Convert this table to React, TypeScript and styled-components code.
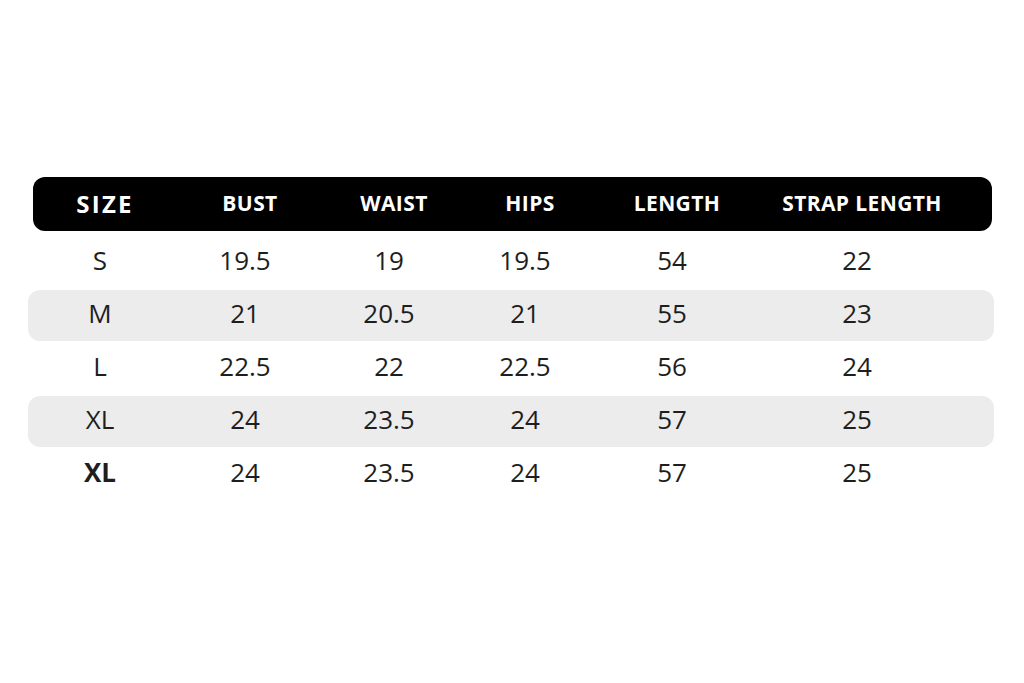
import styled, { createGlobalStyle } from 'styled-components'

const GlobalStyle = createGlobalStyle`
  html, body {
    margin: 0;
    padding: 0;
    background: #ffffff;
  }
  body {
    font-family: 'Open Sans', 'Noto Sans', 'DejaVu Sans', sans-serif;
    color: #1e1e1e;
  }
`

const COLUMNS = '144px 146px 142px 130px 164px 206px 1fr'

const Page = styled.div`
  width: 1024px;
  height: 683px;
  padding-top: 177px;
  box-sizing: border-box;
`

const Table = styled.div`
  margin-left: 28px;
  width: 966px;
  display: flex;
  flex-direction: column;
  gap: 2px;
`

const Header = styled.div`
  display: grid;
  grid-template-columns: ${COLUMNS};
  align-items: center;
  height: 54px;
  margin: 0 2px 4px 5px;
  background: #000000;
  border-radius: 12px;
  color: #ffffff;
`

const HeadCell = styled.div<{ $big?: boolean }>`
  text-align: center;
  font-weight: 700;
  font-size: ${(p) => (p.$big ? '24px' : '21px')};
  letter-spacing: ${(p) => (p.$big ? '2.2px' : '0.4px')};
  padding-bottom: 2px;
`

const Row = styled.div<{ $shaded: boolean }>`
  display: grid;
  grid-template-columns: ${COLUMNS};
  align-items: center;
  height: 51px;
  border-radius: 12px;
  background: ${(p) => (p.$shaded ? '#ececec' : 'transparent')};
`

const Cell = styled.div<{ $bold?: boolean }>`
  text-align: center;
  font-size: 26px;
  font-weight: ${(p) => (p.$bold ? 700 : 400)};
  line-height: 1;
  padding-bottom: 5px;
`

const headers = ['SIZE', 'BUST', 'WAIST', 'HIPS', 'LENGTH', 'STRAP LENGTH']

const rows: { size: string; values: string[]; bold?: boolean }[] = [
  { size: 'S', values: ['19.5', '19', '19.5', '54', '22'] },
  { size: 'M', values: ['21', '20.5', '21', '55', '23'] },
  { size: 'L', values: ['22.5', '22', '22.5', '56', '24'] },
  { size: 'XL', values: ['24', '23.5', '24', '57', '25'] },
  { size: 'XL', values: ['24', '23.5', '24', '57', '25'], bold: true },
]

export default function App() {
  return (
    <Page>
      <GlobalStyle />
      <Table>
        <Header>
          {headers.map((h, i) => (
            <HeadCell key={h} $big={i === 0}>
              {h}
            </HeadCell>
          ))}
        </Header>
        {rows.map((row, i) => (
          <Row key={i} $shaded={i % 2 === 1}>
            <Cell $bold={row.bold}>{row.size}</Cell>
            {row.values.map((v, j) => (
              <Cell key={j}>{v}</Cell>
            ))}
          </Row>
        ))}
      </Table>
    </Page>
  )
}
